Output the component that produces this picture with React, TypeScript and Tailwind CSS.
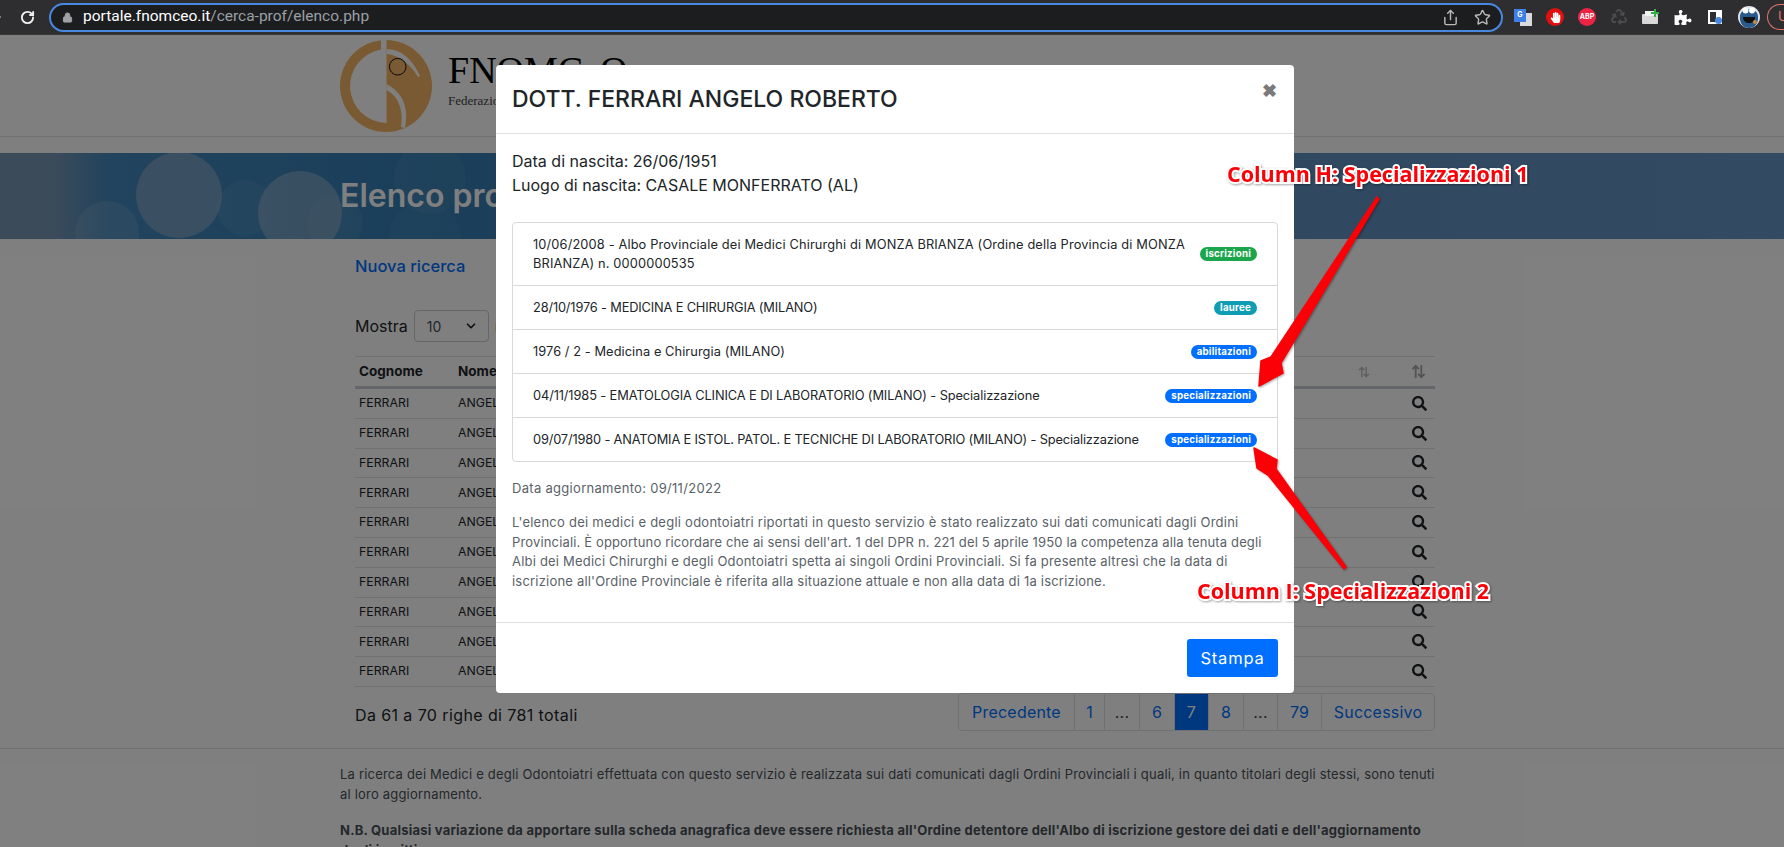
import React from 'react';
import { ArrowRight, ChevronDown, RotateCw, Lock, Star, Share } from 'lucide-react';
import { FaSearch, FaHandPaper, FaRecycle, FaPuzzlePiece } from 'react-icons/fa';

const items = [
  {
    text: '10/06/2008 - Albo Provinciale dei Medici Chirurghi di MONZA BRIANZA (Ordine della Provincia di MONZA BRIANZA) n. 0000000535',
    badge: 'iscrizioni',
    color: 'bg-[#1ba64c]',
    tracking: 'tracking-[0.15px]',
  },
  { text: '28/10/1976 - MEDICINA E CHIRURGIA (MILANO)', badge: 'lauree', color: 'bg-[#0f9db3]', tracking: 'tracking-[-0.15px]' },
  { text: '1976 / 2 - Medicina e Chirurgia (MILANO)', badge: 'abilitazioni', color: 'bg-[#006eff]', tracking: 'tracking-[0.08px]' },
  {
    text: '04/11/1985 - EMATOLOGIA CLINICA E DI LABORATORIO (MILANO) - Specializzazione',
    badge: 'specializzazioni',
    color: 'bg-[#006eff]',
    tracking: 'tracking-[-0.1px]',
  },
  {
    text: '09/07/1980 - ANATOMIA E ISTOL. PATOL. E TECNICHE DI LABORATORIO (MILANO) - Specializzazione',
    badge: 'specializzazioni',
    color: 'bg-[#006eff]',
    tracking: 'tracking-[-0.15px]',
  },
];

const disclaimer = [
  { text: "L'elenco dei medici e degli odontoiatri riportati in questo servizio è stato realizzato sui dati comunicati dagli Ordini", tracking: 'tracking-[0.25px]' },
  { text: "Provinciali. È opportuno ricordare che ai sensi dell'art. 1 del DPR n. 221 del 5 aprile 1950 la competenza alla tenuta degli", tracking: 'tracking-[0.15px]' },
  { text: 'Albi dei Medici Chirurghi e degli Odontoiatri spetta ai singoli Ordini Provinciali. Si fa presente altresì che la data di', tracking: 'tracking-[0.2px]' },
  { text: "iscrizione all'Ordine Provinciale è riferita alla situazione attuale e non alla data di 1a iscrizione.", tracking: 'tracking-[0.2px]' },
];

const pages = [
  { label: 'Precedente', w: 'w-[115px]' },
  { label: '1', w: 'w-[30px]' },
  { label: '...', w: 'w-[35px]', muted: true },
  { label: '6', w: 'w-[35px]' },
  { label: '7', w: 'w-[34px]', active: true },
  { label: '8', w: 'w-[35px]' },
  { label: '...', w: 'w-[34px]', muted: true },
  { label: '79', w: 'w-[44px]' },
  { label: 'Successivo', w: 'w-[113px]' },
];

const SortIcon = ({ size, color }: { size: number; color: string }) => (
  <svg width={size} height={size} viewBox="0 0 16 16" fill="none" stroke={color} strokeWidth="2">
    <path d="M5 15V2M1.500 5.500 5 2l3.500 3.500" />
    <path d="M11 1v13M7.500 10.500 11 14l3.500-3.500" />
  </svg>
);

const Logo = () => (
  <svg width="92" height="92" viewBox="0 0 92 92" className="shrink-0">
    <circle cx="46" cy="46" r="46" fill="#f4b464" />
    {/* left half of the ring, open at the top */}
    <path d="M41 9.500A37 37 0 0 0 46.500 83L46.500 0L41 0Z" fill="#ffffff" />
    {/* thin crescent above the snake */}
    <path d="M46.500 9C60 9 72 18 80 36L78 37C72 26 60 15 46.500 14Z" fill="#ffffff" />
    {/* band below the neck */}
    <path d="M46.500 44C58 50 70 62 65 88L61 87C64 70 58 56 46.500 50Z" fill="#ffffff" />
    <circle cx="57.700" cy="26.700" r="8.300" fill="none" stroke="#111" strokeWidth="1" />
  </svg>
);

const Hero = () => (
  <svg className="absolute inset-0 h-full w-full" viewBox="0 0 1784 86" preserveAspectRatio="none">
    <defs>
      <linearGradient id="heroBg" x1="0" y1="0" x2="1" y2="0">
        <stop offset="0" stopColor="#7896b4" />
        <stop offset="0.03" stopColor="#7896b4" />
        <stop offset="0.06" stopColor="#4488bc" />
        <stop offset="0.25" stopColor="#347eb4" />
        <stop offset="0.5" stopColor="#5a8ebe" />
        <stop offset="1" stopColor="#6696c4" />
      </linearGradient>
    </defs>
    <rect width="1784" height="86" fill="url(#heroBg)" />
    <circle cx="245" cy="55" r="28" fill="#ffffff" opacity="0.06" />
    <circle cx="107" cy="80" r="32" fill="#ffffff" opacity="0.1" />
    <circle cx="430" cy="25" r="36" fill="#ffffff" opacity="0.05" />
    <circle cx="425" cy="85" r="36" fill="#ffffff" opacity="0.04" />
    <circle cx="335" cy="70" r="28" fill="#ffffff" opacity="0.06" />
    <circle cx="179" cy="42" r="43" fill="#a8bccf" opacity="0.5" />
    <circle cx="300" cy="60" r="42" fill="#a8bccf" opacity="0.5" />
  </svg>
);

const Arrow = ({ points }: { points: string }) => (
  <polygon points={points} fill="#fb0007" stroke="#fb0007" strokeWidth="1.500" strokeLinejoin="round" />
);

export default function App() {
  return (
    <div className="flex h-[847px] flex-col overflow-hidden bg-white font-['Inter',sans-serif]">
      {/* Browser toolbar */}
      <div className="flex h-[35px] shrink-0 items-center border-b border-[#3a3a3a] bg-[#2e2e30]">
        <ArrowRight className="-ml-[11px] h-[14px] w-[14px] shrink-0 text-[#9a9a9a]" strokeWidth={2.5} />
        <RotateCw className="ml-[17px] h-[15px] w-[15px] shrink-0 text-[#f0f0f0]" strokeWidth={3} />
        <div className="ml-[14px] flex h-[29px] w-[1454px] shrink-0 items-center rounded-full border-2 border-[#4a87e0] bg-[#1c1d1f] pr-[10px] font-['Roboto',sans-serif]">
          <Lock className="ml-[11px] h-[11px] w-[11px] text-[#a0a2a5]" fill="#a0a2a5" />
          <span className="ml-[10px] text-[15.500px] text-white">
            portale.fnomceo.it<span className="text-[#9aa0a6]">/cerca-prof/elenco.php</span>
          </span>
          <Share className="ml-auto h-[17px] w-[17px] text-[#b9b9b9]" />
          <Star className="ml-[15px] h-[17px] w-[17px] text-[#b9b9b9]" />
        </div>
        <div className="ml-[11px] flex items-center gap-[14px]">
          <div className="relative h-[17px] w-[18px]">
            <div className="absolute bottom-0 right-0 h-[13px] w-[12px] bg-[#d8dadd]" />
            <div className="absolute left-0 top-0 flex h-[13px] w-[12px] items-center justify-center bg-[#3f7fe8] text-[7px] font-bold text-white">G</div>
          </div>
          <div className="flex h-[18px] w-[18px] items-center justify-center rounded-full bg-[#e11010]">
            <FaHandPaper className="h-[11px] w-[11px] text-white" />
          </div>
          <div className="flex h-[18px] w-[18px] items-center justify-center rounded-full bg-[#ee2344] text-[7px] font-bold text-white">ABP</div>
          <FaRecycle className="h-[16px] w-[18px] text-[#4b4b4b]" />
          <svg width="18" height="16" viewBox="0 0 18 16">
            <rect x="0" y="5" width="16" height="10" rx="1" fill="#d8d8d8" />
            <rect x="3" y="2" width="9" height="5" fill="#f2f2f2" />
            <path d="M12 0h2v3h3v2h-3v3h-2V5H9V3h3z" fill="#2fb344" />
          </svg>
          <FaPuzzlePiece className="h-[15px] w-[18px] text-white" />
          <div className="flex w-[18px] justify-center">
            <div className="relative h-[14px] w-[14px] border-2 border-r-[6px] border-white bg-[#2e2e30]">
              <div className="absolute -bottom-[2px] -right-[6px] h-[7px] w-[7px] rounded-full bg-[#4a87e0]" />
            </div>
          </div>
          <svg width="22" height="22" viewBox="0 0 22 22" className="shrink-0">
            <circle cx="11" cy="11" r="11" fill="#dfe4ea" />
            <path d="M2 13C1 6 6 3 11 3s10 3 9 10c0 5-4 9-9 9s-9-4-9-9z" fill="#2a5a8c" />
            <circle cx="7.500" cy="4.500" r="3" fill="#fff" />
            <circle cx="14" cy="4.500" r="3" fill="#fff" />
            <path d="M5 11h12c0 4-3 6-6 6s-6-2-6-6z" fill="#111" />
            <circle cx="17" cy="16" r="2" fill="#c78a45" />
          </svg>
          <div className="-ml-[7px] flex h-[26px] w-[30px] shrink-0 items-center rounded-l-full border border-r-0 border-[#e3736a] pl-[10px] text-[13px] text-[#e3736a]">U</div>
        </div>
      </div>

      {/* Page behind the dialog */}
      <div className="relative flex-1 overflow-hidden">
        <div className="flex h-[102px] items-start gap-[16px] border-b border-[#e2e2e2] pl-[340px] pt-[5px] font-['Liberation_Serif',serif]">
          <Logo />
          <div className="mt-[7px] text-black">
            <div className="text-[38px] leading-[46px]">FNOMCeO</div>
            <div className="text-[13px] leading-[16px] text-[#444]">Federazione Nazionale degli Ordini dei Medici Chirurghi e degli Odontoiatri</div>
          </div>
        </div>
        <div className="relative mt-[16px] flex h-[86px] items-center pl-[340px]">
          <Hero />
          <h1 className="relative text-[32px] font-semibold text-white">Elenco professionisti</h1>
        </div>

        <div className="pl-[355px] pr-[349px]">
          <a className="mt-[15px] block text-[16.500px] font-medium leading-[24px] text-[#0070ff]">Nuova ricerca</a>
          <div className="mt-[32px] flex items-center gap-[6px] text-[16px] text-[#212529]">
            Mostra
            <div className="flex h-[32px] w-[75px] items-center justify-between rounded border border-[#ccc] px-[12px] text-[14px] text-[#495057]">
              10
              <ChevronDown className="-mr-[2px] h-[14px] w-[14px] text-[#222]" strokeWidth={3} />
            </div>
            righe
          </div>

          <div className="mt-[14px] border-t border-[#dee2e6] text-[12.300px] text-[#212529]">
            <div className="flex h-[32px] items-center border-b-[3px] border-[#c9cdd2] pl-[4px] pr-[9px] text-[13.500px] font-bold">
              <span className="w-[99px]">Cognome</span>
              <span className="flex-1">Nome</span>
              <span className="mr-[41px]"><SortIcon size={12} color="#c0c0c0" /></span>
              <SortIcon size={15} color="#a8a8a8" />
            </div>
            {Array.from({ length: 10 }).map((_, i) => (
              <div key={i} className="flex h-[29.800px] items-center border-b border-[#dee2e6] pl-[4px] pr-[8px]">
                <span className="w-[99px]">FERRARI</span>
                <span className="flex-1">ANGELO ROBERTO</span>
                <FaSearch className="h-[15px] w-[15px] text-[#212529]" />
              </div>
            ))}
          </div>

          <div className="mt-[6px] flex items-center justify-between">
            <span className="mt-[6px] text-[16px] tracking-[0.4px] text-[#212529]">Da 61 a 70 righe di 781 totali</span>
            <div className="flex h-[38px] overflow-hidden rounded border border-[#dee2e6] text-[16px] tracking-[0.2px]">
              {pages.map((p, i) => (
                <span
                  key={i}
                  className={`${p.w} flex items-center justify-center ${i > 0 ? 'border-l border-[#dee2e6]' : ''} ${
                    p.active ? 'bg-[#0070ff] text-white' : p.muted ? 'text-[#444]' : 'text-[#0070ff]'
                  }`}
                >
                  {p.label}
                </span>
              ))}
            </div>
          </div>
        </div>

        <div className="mt-[17px] border-t border-[#dee2e6] pl-[340px] pr-[346px] pt-[15px] text-[13px] leading-[20px] text-[#495057]">
          <p className="tracking-[0.2px]">
            La ricerca dei Medici e degli Odontoiatri effettuata con questo servizio è realizzata sui dati comunicati dagli Ordini Provinciali i quali, in quanto titolari degli stessi, sono tenuti al loro aggiornamento.
          </p>
          <p className="mt-[16px] font-bold tracking-[0.23px]">
            N.B. Qualsiasi variazione da apportare sulla scheda anagrafica deve essere richiesta all'Ordine detentore dell'Albo di iscrizione gestore dei dati e dell'aggiornamento degli iscritti.
          </p>
        </div>

        <div className="absolute inset-0 bg-black/50" />

        {/* Dialog */}
        <div className="absolute inset-0 pl-[496px] pt-[30px]">
          <div className="w-[798px] rounded bg-white">
            <div className="flex h-[69px] items-start justify-between border-b border-[#dee2e6] px-[16px] pt-[16px]">
              <h2 className="text-[23px] font-medium leading-[36px] text-[#212529]">DOTT. FERRARI ANGELO ROBERTO</h2>
              <span className="mr-[1px] mt-[-2px] text-[18px] font-bold leading-[24px] text-[#7a7a7a]">✖</span>
            </div>
            <div className="px-[16px] pt-[15px]">
              <div className="text-[16px] leading-[24px] text-[#212529]">
                <div>Data di nascita: 26/06/1951</div>
                <div>Luogo di nascita: CASALE MONFERRATO (AL)</div>
              </div>
              <div className="mt-[25px] rounded border border-[#d9d9d9] text-[12.800px] leading-[19px] text-[#212529]">
                {items.map((it, i) => (
                  <div
                    key={i}
                    className={`flex items-center justify-between gap-[12px] px-[20px] py-[12px] ${i > 0 ? 'border-t border-[#d9d9d9]' : ''}`}
                  >
                    <span className={it.tracking}>{it.text}</span>
                    <span className={`${it.color} shrink-0 rounded-full px-[6px] text-[9.750px] font-bold leading-[14px] tracking-[0.2px] text-white`}>{it.badge}</span>
                  </div>
                ))}
              </div>
              <p className="mt-[16px] text-[13px] leading-[20px] tracking-[0.3px] text-[#5a6268]">Data aggiornamento: 09/11/2022</p>
              <p className="mt-[15px] whitespace-nowrap text-[13px] leading-[19.500px] text-[#5a6268]">
                {disclaimer.map((line) => (
                  <span key={line.text} className={`block ${line.tracking}`}>{line.text}</span>
                ))}
              </p>
            </div>
            <div className="mt-[31px] flex h-[71px] items-start justify-end border-t border-[#dee2e6] px-[16px] pt-[16px]">
              <button className="h-[38px] w-[91px] rounded-[3px] bg-[#006eff] text-[16.500px] tracking-[0.8px] text-white">Stampa</button>
            </div>
          </div>
        </div>

        {/* Annotations drawn over the screenshot */}
        <svg className="pointer-events-none absolute inset-0 h-full w-full drop-shadow-[1px_1px_1px_rgba(0,0,0,0.35)]">
          <Arrow points="1377,162 1271,322 1261,326 1259,351 1283,338 1281,328 1379,164" />
          <Arrow points="1346,532 1276,434 1277,425 1254,413 1257,433 1268,440 1344,534" />
        </svg>
        <div className="absolute left-[1227px] top-[125px] whitespace-nowrap font-['Open_Sans',sans-serif] text-[21.500px] font-bold leading-[28px] text-[#fb0007] drop-shadow-[1px_1px_1px_rgba(0,0,0,0.35)] [-webkit-text-stroke:4px_white] [paint-order:stroke_fill]">
          Column H: Specializzazioni 1
        </div>
        <div className="absolute left-[1197px] top-[542px] whitespace-nowrap font-['Open_Sans',sans-serif] text-[21.500px] font-bold leading-[28px] text-[#fb0007] drop-shadow-[1px_1px_1px_rgba(0,0,0,0.35)] [-webkit-text-stroke:4px_white] [paint-order:stroke_fill]">
          Column I: Specializzazioni 2
        </div>
      </div>
    </div>
  );
}
